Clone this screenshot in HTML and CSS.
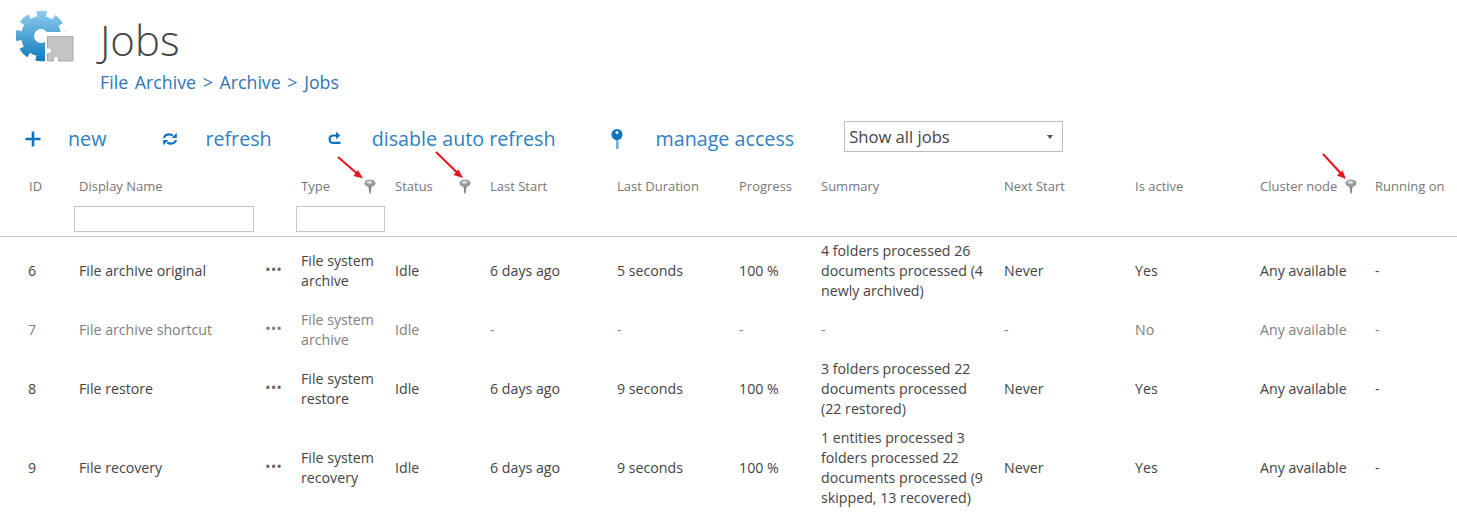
FILE: index.html
```html
<!DOCTYPE html>
<html lang="en">
<head>
<meta charset="utf-8">
<title>Jobs</title>
<link rel="stylesheet" href="styles.css">
</head>
<body>
<svg width="0" height="0" class="defs">
  <defs>
    <linearGradient id="gearGrad" gradientUnits="userSpaceOnUse" x1="0" y1="11" x2="0" y2="61">
      <stop offset="0" stop-color="#8fcdf0"/>
      <stop offset="1" stop-color="#1079b8"/>
    </linearGradient>
    <symbol id="pin" viewBox="0 0 12 15">
      <ellipse cx="6" cy="4.2" rx="5.500" ry="3.800" fill="#9a9a9a"/>
      <ellipse cx="5.500" cy="3.300" rx="2.800" ry="1.500" fill="#dcdcdc"/>
      <path d="M4.400 7h3.200L6.700 14.500H5.300z" fill="#8a8a8a"/>
    </symbol>
  </defs>
</svg>

<header class="page-head">
  <svg class="logo" width="64" height="58" viewBox="14 8 64 58">
    <circle cx="39" cy="36" r="13.500" fill="none" stroke="url(#gearGrad)" stroke-width="13"/>
    <circle cx="39" cy="36" r="22.500" fill="none" stroke="url(#gearGrad)" stroke-width="5.500" stroke-dasharray="10 7.670" stroke-dashoffset="5"/>
    <path d="M43 32h35v34H43z" fill="#fff"/>
    <path d="M45.500 36.500h25.500v24.500H56.500c.8-3.500-.8-5-2.500-5s-3.300 1.500-2.500 5H45.500V53.500c2.800.8 4.500-.8 4.500-2.700s-1.700-3.500-4.500-2.700z" fill="#c4c4c4" stroke="#a9a9a9" stroke-width="1"/>
  </svg>
  <div class="head-text">
    <h1 class="title">Jobs</h1>
    <nav class="crumbs">File Archive &gt; Archive &gt; Jobs</nav>
  </div>
</header>

<div class="toolbar">
  <a class="tool tool-new">
    <svg class="tool-icon" width="18" height="18" viewBox="0 0 18 18"><path d="M9 1.500v15M1.500 9h15" stroke="#0f72bd" stroke-width="2.600" fill="none"/></svg>
    <span>new</span>
  </a>
  <a class="tool tool-refresh">
    <svg class="tool-icon" width="16" height="16" viewBox="0 0 16 16"><path d="M2 7c.8-2.600 2.800-3.600 5-3.600 1.500 0 2.700.4 3.800 1.300M14 9c-.8 2.600-2.800 3.600-5 3.600-1.500 0-2.700-.4-3.800-1.300" stroke="#0f72bd" stroke-width="2.200" fill="none"/><path d="M9.500 7h5.300V1.800zM6.500 9H1.200v5.200z" fill="#0f72bd"/></svg>
    <span>refresh</span>
  </a>
  <a class="tool tool-auto">
    <svg class="tool-icon" width="16" height="16" viewBox="0 0 16 16"><path d="M10 4.500H6.500C4 4.500 2.600 6 2.600 8.200s1.500 3.700 3.900 3.700h7" stroke="#0f72bd" stroke-width="2.200" fill="none"/><path d="M9 .8v7.400l4.300-3.700z" fill="#0f72bd"/></svg>
    <span>disable auto refresh</span>
  </a>
  <a class="tool tool-access">
    <svg class="tool-icon" width="14" height="22" viewBox="0 0 14 22"><path d="M6 10h2.600v11H6z" fill="#79aedb"/><circle cx="7" cy="6.500" r="5.500" fill="#0f72bd"/><circle cx="7" cy="4.600" r="1.500" fill="#fff"/></svg>
    <span>manage access</span>
  </a>
  <div class="select">
    <span>Show all jobs</span>
    <i class="caret"></i>
  </div>
</div>

<table class="jobs">
  <colgroup>
    <col class="c-id"><col class="c-name"><col class="c-dots"><col class="c-type"><col class="c-status"><col class="c-start"><col class="c-dur"><col class="c-prog"><col class="c-sum"><col class="c-next"><col class="c-active"><col class="c-node"><col class="c-run">
  </colgroup>
  <thead>
    <tr>
      <th class="id">ID</th>
      <th colspan="2">Display Name</th>
      <th><span class="th-flex">Type<svg class="pin pin-type"><use href="#pin"/></svg></span></th>
      <th><span class="th-flex">Status<svg class="pin pin-status"><use href="#pin"/></svg></span></th>
      <th>Last Start</th>
      <th>Last Duration</th>
      <th>Progress</th>
      <th>Summary</th>
      <th>Next Start</th>
      <th>Is active</th>
      <th><span class="th-flex">Cluster node<svg class="pin pin-node"><use href="#pin"/></svg></span></th>
      <th>Running on</th>
    </tr>
    <tr class="filters">
      <td></td>
      <td><div class="filter filter-name"></div></td>
      <td></td>
      <td><div class="filter filter-type"></div></td>
      <td colspan="9"></td>
    </tr>
  </thead>
  <tbody>
    <tr>
      <td class="id">6</td><td>File archive original</td><td class="dots">•••</td><td>File system archive</td><td>Idle</td><td>6 days ago</td><td>5 seconds</td><td>100 %</td>
      <td class="sum">4 folders processed 26 documents processed (4 newly archived)</td><td>Never</td><td>Yes</td><td>Any available</td><td>-</td>
    </tr>
    <tr class="off">
      <td class="id">7</td><td>File archive shortcut</td><td class="dots">•••</td><td>File system archive</td><td>Idle</td><td>-</td><td>-</td><td>-</td>
      <td class="sum">-</td><td>-</td><td>No</td><td>Any available</td><td>-</td>
    </tr>
    <tr>
      <td class="id">8</td><td>File restore</td><td class="dots">•••</td><td>File system restore</td><td>Idle</td><td>6 days ago</td><td>9 seconds</td><td>100 %</td>
      <td class="sum">3 folders processed 22 documents processed (22 restored)</td><td>Never</td><td>Yes</td><td>Any available</td><td>-</td>
    </tr>
    <tr>
      <td class="id">9</td><td>File recovery</td><td class="dots">•••</td><td>File system recovery</td><td>Idle</td><td>6 days ago</td><td>9 seconds</td><td>100 %</td>
      <td class="sum">1 entities processed 3 folders processed 22 documents processed (9 skipped, 13 recovered)</td><td>Never</td><td>Yes</td><td>Any available</td><td>-</td>
    </tr>
  </tbody>
</table>

<svg class="arrows" width="1457" height="512" viewBox="0 0 1457 512">
  <g stroke="#e8141c" stroke-width="2" fill="#e8141c">
    <path d="M338 157L357 173.500"/>
    <path d="M363 178.500l-9.500-2.500 4.500-6z" stroke="none"/>
    <path d="M436 152L457 172.500"/>
    <path d="M463 178l-9.500-3 5-5.500z" stroke="none"/>
    <path d="M1323 154L1341 173.500"/>
    <path d="M1346 179l-9-3.500 5.500-5z" stroke="none"/>
  </g>
</svg>
</body>
</html>
```
FILE: styles.css
```css
html, body {
  margin: 0;
  padding: 0;
  height: 512px;
  overflow: hidden;
  background: #fff;
}
body {
  position: relative;
  font-family: "Open Sans", "Noto Sans", sans-serif;
  color: #444;
}
.defs {
  position: absolute;
}
.page-head {
  display: flex;
  height: 119px;
  box-sizing: border-box;
  padding: 8px 0 0 16px;
}
.logo {
  flex: none;
}
.head-text {
  margin-left: 20px;
}
.title {
  margin: 0;
  padding: 4px 0 0;
  font-size: 42px;
  line-height: 56px;
  font-weight: 300;
  color: #444;
}
.crumbs {
  margin-top: 2px;
  font-size: 17.800px;
  word-spacing: 2px;
  line-height: 24px;
  color: #2f76b5;
}
.toolbar {
  display: flex;
  align-items: center;
  height: 36px;
  box-sizing: border-box;
  padding-left: 24px;
}
.tool {
  display: flex;
  align-items: center;
  font-size: 19.700px;
  line-height: 30px;
  color: #2f7fc4;
  margin-top: 4px;
}
.tool-icon {
  flex: none;
}
.tool-new span { margin-left: 26px; }
.tool-refresh { margin-left: 56px; }
.tool-refresh span { margin-left: 27px; }
.tool-auto { margin-left: 55px; }
.tool-auto span { margin-left: 29px; }
.tool-access { margin-left: 55px; }
.tool-access span { margin-left: 31px; }
.select {
  display: flex;
  align-items: center;
  justify-content: space-between;
  box-sizing: border-box;
  width: 219px;
  height: 31px;
  margin-left: 50px;
  margin-top: -1px;
  padding: 0 9px 0 4px;
  border: 1px solid #bdbdbd;
  font-size: 16.600px;
  color: #444;
}
.caret {
  width: 0;
  height: 0;
  border-left: 3.500px solid transparent;
  border-right: 3.500px solid transparent;
  border-top: 4px solid #555;
}
.jobs {
  width: 1457px;
  table-layout: fixed;
  border-collapse: collapse;
  font-size: 14.200px;
  line-height: 20px;
}
.c-id { width: 74px; }
.c-name { width: 180px; }
.c-dots { width: 42px; }
.c-type { width: 94px; }
.c-status { width: 95px; }
.c-start { width: 127px; }
.c-dur { width: 122px; }
.c-prog { width: 82px; }
.c-sum { width: 183px; }
.c-next { width: 131px; }
.c-active { width: 125px; }
.c-node { width: 115px; }
.c-run { width: 87px; }
.jobs th {
  height: 20px;
  padding: 21px 5px 8px;
  box-sizing: content-box;
  text-align: left;
  font-weight: 400;
  font-size: 13px;
  color: #777;
  white-space: nowrap;
}
.jobs th.id {
  padding-left: 29px;
}
.th-flex {
  display: flex;
  align-items: center;
}
.pin {
  flex: none;
  width: 12px;
  height: 15px;
}
.pin-type { margin-left: 34px; }
.pin-status { margin-left: 26px; }
.pin-node { margin-left: 8px; }
.filters td {
  padding: 2px 0 4px;
  border-bottom: 1px solid #c6c6c6;
}
.filter {
  box-sizing: border-box;
  height: 26px;
  border: 1px solid #c6c6c6;
  background: #fff;
}
.filter-name { width: 180px; }
.filter-type { width: 89px; }
.jobs tbody td {
  padding: 4px 5px 5px;
  vertical-align: middle;
  color: #444;
}
.jobs tbody td.id {
  padding-left: 28px;
}
.jobs tbody td.sum {
  padding-right: 15px;
}
.jobs tbody td.dots {
  padding: 0 0 5px 11px;
  font-size: 15px;
  color: #666;
}
.jobs tbody tr.off td {
  color: #808080;
}
.arrows {
  position: absolute;
  left: 0;
  top: 0;
  pointer-events: none;
}
```
